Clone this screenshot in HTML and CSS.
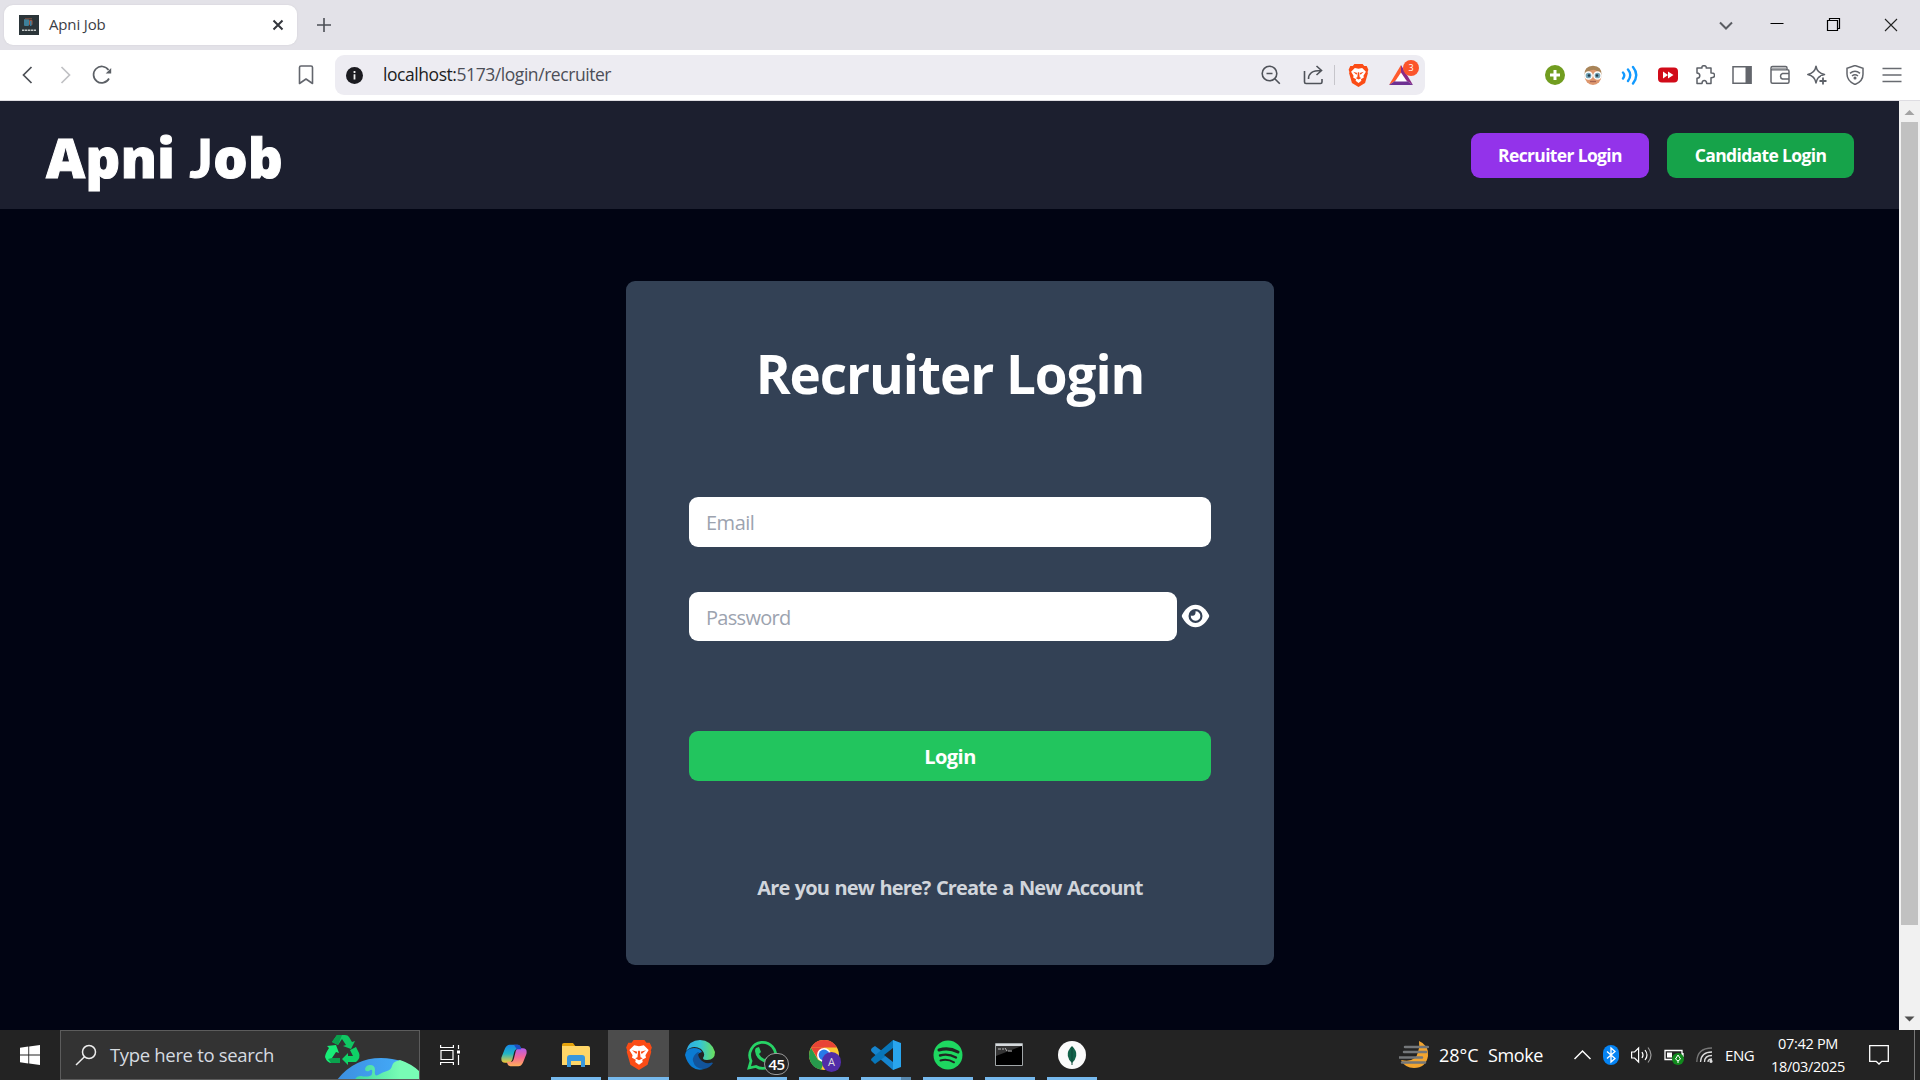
FILE: index.html
```html
<!DOCTYPE html>
<html lang="en">
<head>
<meta charset="utf-8">
<title>Apni Job</title>
<link rel="stylesheet" href="styles.css">
</head>
<body>
<div class="screen">
  <div class="tabbar">
    <div class="tab">
      <svg class="favicon" width="20" height="20" viewBox="0 0 20 20"><rect width="20" height="20" fill="#2b3539"/><rect x="5" y="4" width="5" height="7" rx="1" fill="#3d7f99"/><path d="M6 3h7v1.500H6z" fill="#6b4b40"/><rect x="10" y="5" width="3.500" height="5" rx="1" fill="#9d5a45"/><path d="M11 6h1.500v5H11z" fill="#397c9e"/><path d="M3 15.300h14" stroke="#c4c9c9" stroke-width="1.600" stroke-dasharray="2.400 .6"/></svg>
      <span class="tab-title">Apni Job</span>
      <svg class="tab-close" width="12" height="12" viewBox="0 0 12 12"><path d="M1.500 1.500l9 9M10.500 1.500l-9 9" stroke="#33363c" stroke-width="2"/></svg>
    </div>
    <svg class="newtab" width="14" height="14" viewBox="0 0 14 14"><path d="M7 0v14M0 7h14" stroke="#4c4f55" stroke-width="1.600"/></svg>
    <div class="window-controls">
      <svg width="20" height="20" viewBox="0 0 20 20" fill="none"><path d="M4 7.500l6 6 6-6" stroke="#5a5c62" stroke-width="2"/></svg>
      <svg class="minimise" width="20" height="20" viewBox="0 0 20 20"><path d="M3.500 8.500h13" stroke="#000"/></svg>
      <svg class="restore" width="20" height="20" viewBox="0 0 20 20" fill="none" stroke="#000" stroke-width="1.200"><path d="M4.500 5.500h10v10h-10zM6.500 5v-1.500h10v10h-2"/></svg>
      <svg class="close" width="20" height="20" viewBox="0 0 20 20"><path d="M4 4l12 12M16 4L4 16" stroke="#222" stroke-width="1.100"/></svg>
    </div>
  </div>

  <div class="toolbar">
    <div class="nav">
      <svg width="20" height="20" viewBox="0 0 20 20" fill="none"><path d="M13.500 2L5.500 10l8 8" stroke="#4c4f55" stroke-width="1.700"/></svg>
      <svg width="20" height="20" viewBox="0 0 20 20" fill="none"><path d="M6.500 2l8 8-8 8" stroke="#c0c1c4" stroke-width="1.700"/></svg>
      <svg width="20" height="20" viewBox="0 0 20 20" fill="none"><path d="M17 13.500A8.200 8.200 0 1 1 16.500 5" stroke="#5c6066" stroke-width="1.700"/><path d="M19.200 3v5.500h-5.500z" fill="#5c6066"/></svg>
    </div>
    <svg class="bookmark" width="16" height="20" viewBox="0 0 16 20" fill="none"><path d="M1.500 2.500q0-1.500 1.500-1.500h10q1.500 0 1.500 1.500V18.500L8 14l-6.500 4.500z" stroke="#63666d" stroke-width="1.600" stroke-linejoin="round"/></svg>
    <div class="address">
      <svg width="17" height="17" viewBox="0 0 17 17"><circle cx="8.500" cy="8.500" r="8.500" fill="#1b1b20"/><path d="M8.500 7.200v5.300M8.500 4v2" stroke="#eee" stroke-width="1.800"/></svg>
      <span class="url"><span class="host">localhost:</span>5173/login/recruiter</span>
      <div class="address-icons">
        <svg width="20" height="20" viewBox="0 0 20 20" fill="none" stroke="#4f5259" stroke-width="1.600"><circle cx="8.500" cy="8.500" r="7.300"/><path d="M13.800 13.800l5 5M5.500 8.500h6"/></svg>
        <svg width="20" height="20" viewBox="0 0 20 20" fill="none" stroke="#4f5259" stroke-width="1.600"><path d="M1.500 6v11q0 1.500 1.500 1.500h14.500q1.500 0 1.500-1.500v-3M5.500 14C5.500 8 9 5.500 18 5.500M13.500 1l5 4.500-5 4.500"/></svg>
        <i class="divider"></i>
        <svg class="brave" width="21" height="23" viewBox="0 0 24 28"><use href="#lion"/></svg>
        <div class="rewards">
          <svg width="24" height="20" viewBox="0 0 24 20"><path d="M12 0L0 20l12-8z" fill="#ff5b2e"/><path d="M12 0l12 20-12-8z" fill="#8b2a86"/><path d="M0 20h24L12 12z" fill="#6d3092"/><path d="M12 7.500L6 16.500h12z" fill="#fff"/></svg>
          <span class="badge">3</span>
        </div>
      </div>
    </div>
    <div class="extensions">
      <svg width="20" height="20" viewBox="0 0 20 20"><circle cx="10" cy="10" r="10" fill="#719d20"/><path d="M10 5v10M5 10h10" stroke="#fff" stroke-width="3"/></svg>
      <svg width="20" height="20" viewBox="0 0 20 20"><ellipse cx="10" cy="11" rx="8.500" ry="9" fill="#dd976e"/><path d="M1.500 10Q1 1 10 .8 19 1 18.500 10L15 7Q12 4 9 5 4 6 1.500 10z" fill="#a88458"/><circle cx="5.500" cy="10.500" r="3.600" fill="#74a5b7" stroke="#fff" stroke-width="1.500"/><circle cx="14.500" cy="10.500" r="3.600" fill="#74a5b7" stroke="#fff" stroke-width="1.500"/><circle cx="6" cy="10.500" r="1.300" fill="#253b49"/><circle cx="14" cy="10.500" r="1.300" fill="#253b49"/><path d="M7 16.500h6" stroke="#a86451" stroke-width="1.300"/></svg>
      <svg width="20" height="20" viewBox="0 0 20 20" fill="none" stroke="#129aff" stroke-width="2.400" stroke-linecap="round"><path d="M3 7.500Q5.500 10 3 13.500M8 4.500Q12.500 10 8 16M13 2q6.500 8 0 16.500"/></svg>
      <svg width="20" height="20" viewBox="0 0 20 20"><rect y="2.500" width="20" height="15" rx="4" fill="#d10b19"/><path d="M5 6.500l5 3.500-5 3.500zM10 6.500l5.500 3.500-5.500 3.500z" fill="#fff"/></svg>
      <svg width="20" height="20" viewBox="0 0 20 20" fill="none" stroke="#5d6168" stroke-width="1.500" stroke-linejoin="round"><path d="M2 3h5q-.5-2.300 2-2.300T11.200 3H16v5q3.500-.3 3.500 2.300T16 12.800V18.500h-4.300q-.2-3-2.400-3t-2.300 3H2v-5.200q2.800-.2 2.800-2.600T2 8z"/></svg>
      <svg width="20" height="20" viewBox="0 0 20 20"><path d="M1 1.700h18v16.600H1z" fill="none" stroke="#63666c" stroke-width="1.500"/><path d="M13.500 1h6v18h-6z" fill="#63666c"/></svg>
      <svg width="20" height="20" viewBox="0 0 20 20" fill="none" stroke="#63666c" stroke-width="1.500"><path d="M1 5V3q0-1.500 1.500-1.500h13Q17 1.500 17 3v2M1 4.800h16.500q1.500 0 1.500 1.500v10.500q0 1.500-1.500 1.500h-15q-1.500 0-1.500-1.500zM19 8.500h-6.500q-2 .5-2 2.700t2 2.800H19"/><path d="M2 3.500h14" stroke="#a5a7aa" stroke-width="2"/></svg>
      <svg width="20" height="20" viewBox="0 0 20 20"><path d="M9 1.200Q10 8 17.500 9.500 10 11 9 18 8 11 .8 9.500 8 8 9 1.200z" fill="none" stroke="#5d6168" stroke-width="1.500" stroke-linejoin="round"/><path d="M16 11v9M11.500 15.500h9" stroke="#fff" stroke-width="4"/><path d="M16 12.500v7M12.500 16h7" stroke="#5d6168" stroke-width="1.800"/></svg>
      <svg width="20" height="20" viewBox="0 0 20 20" fill="none" stroke="#63666c" stroke-width="1.500"><path d="M10 .5l8 2.700v6q0 7-8 10.300Q2 16 2 9V3.200z"/><path d="M5 8.300q5-4 10 0M7 11q3-2.500 6 0"/><circle cx="10" cy="13" r=".8"/></svg>
      <svg width="20" height="20" viewBox="0 0 20 20"><path d="M.5 3.500h19M.5 10h19M.5 16.500h19" stroke="#686b71" stroke-width="1.500"/></svg>
    </div>
  </div>

  <div class="viewport">
    <div class="page">
      <header class="site-header">
        <h1 class="brand">Apni <span class="cap-j">J</span>ob</h1>
        <nav class="logins">
          <a class="pill purple">Recruiter Login</a>
          <a class="pill green">Candidate Login</a>
        </nav>
      </header>
      <main class="content">
        <section class="card">
          <h2 class="card-title">Recruiter Login</h2>
          <div class="field email">Email</div>
          <div class="password-row">
            <div class="field password">Password</div>
            <svg class="eye" width="29" height="24" viewBox="0 0 28 24"><path d="M14 .8c-6 0-10.500 4.600-13.500 10.200q-.4 1 0 2C3.500 18.600 8 23.200 14 23.200S24.500 18.600 27.500 13q.4-1 0-2C24.500 5.400 20 .8 14 .8z" fill="#fff"/><circle cx="14" cy="12" r="7" fill="#334155"/><path d="M14 7.200a4.800 4.800 0 1 1-4.700 4.200c3.500 1.200 5.200-1 4.700-4.200z" fill="#fff"/></svg>
          </div>
          <div class="submit">Login</div>
          <p class="signup">Are you new here? Create a New Account</p>
        </section>
      </main>
    </div>
    <div class="scrollbar">
      <svg width="21" height="21" viewBox="0 0 21 21"><path d="M5.500 14l5-5 5 5z" fill="#a3a3a3"/></svg>
      <div class="thumb"></div>
      <svg width="21" height="21" viewBox="0 0 21 21"><path d="M5.500 7.500l5 5 5-5z" fill="#505050"/></svg>
    </div>
  </div>

  <div class="taskbar">
    <div class="start"><svg width="20" height="20" viewBox="0 0 20 20" fill="#fff"><path d="M0 2.800l8.300-1.200v7.900H0zM9.200 1.500L20 0v9.500H9.200zM0 10.400h8.300v8L0 17.300zM9.200 10.400H20V20L9.200 18.500z"/></svg></div>
    <div class="search">
      <svg width="22" height="22" viewBox="0 0 22 22" fill="none" stroke="#eee" stroke-width="1.500"><circle cx="14" cy="8" r="6.500"/><path d="M9.500 12.800L1 21"/></svg>
      <span class="search-text">Type here to search</span>
      <svg class="earth" width="96" height="48" viewBox="0 0 96 48"><defs><linearGradient id="sea"><stop stop-color="#3c8fe0"/><stop offset="1" stop-color="#46b2ff"/></linearGradient><linearGradient id="land"><stop stop-color="#3fd9a0"/><stop offset=".7" stop-color="#78fcb5"/></linearGradient></defs><path d="M14 4h8q3 0 4 2l3 5 3-1-4 8-8-3 3-1-4-6-4 6-6-3z" fill="#10c763"/><path d="M14 4h5l-4 10-6-3z" fill="#0a9f4c"/><path d="M27 19l6-3 3 6q2 5-3 9h-8v3l-6-6 6-6v3h5z" fill="#0fd367"/><path d="M4 15l9-1 3 8-3-1-4 6h8v5H9q-5 0-7-6 0-3 4-9z" fill="#18ec77"/><path d="M9 27h8v5H8l-3-4z" fill="#0aa14d"/><path d="M14 49Q31 27 58 27q24 0 39 15v7z" fill="url(#sea)"/><path d="M32 49q1-4 6-4 5 1 9 0 3-1 2-6-1-1-3 1-4 1-4-2 1-4 5-4 5 0 5 5-1 7 3 5 5-3 9-4 4-1 5-5 1-4 5-5l3-1q12 4 20 12v9z" fill="url(#land)"/></svg>
    </div>
    <div class="taskview"><svg width="20" height="20" viewBox="0 0 20 20" fill="none" stroke="#fff" stroke-width="1.200"><path d="M1 5.500h12v9H1zM.6 0v2.500h12.800V0M.6 20v-2.500h12.800V20M18.500 0v4M18.500 10v10"/><path d="M17 7h3" stroke-width="3"/></svg></div>
    <div class="apps">
      <div class="app"><svg width="28" height="25" viewBox="0 0 30 28"><defs><linearGradient id="cpa" x2="0" y2="1"><stop stop-color="#1787e8"/><stop offset=".5" stop-color="#20b6c5"/><stop offset="1" stop-color="#f5c933"/></linearGradient><linearGradient id="cpb" x2="0" y2="1"><stop stop-color="#b45dea"/><stop offset=".5" stop-color="#f56796"/><stop offset="1" stop-color="#ffb05a"/></linearGradient></defs><path d="M10 2h9q3 0 4 5h-5q-2 0-3 4l-2 8q-1 3-5 3H5Q0 22 1 16L5 6q2-4 5-4z" fill="url(#cpa)"/><path d="M20 26h-9q-3 0-4-5h5q2 0 3-4l2-8q1-3 5-3h3q5 0 4 6l-4 10q-2 4-5 4z" fill="url(#cpb)"/><path d="M15 2h4q3 0 4 5h-5z" fill="#1d4dc3"/></svg></div>
      <div class="app open"><svg width="28" height="24" viewBox="0 0 28 24"><path d="M0 2q0-2 2-2h9l3 4H0z" fill="#e5a30b"/><path d="M0 3h26q2 0 2 2v17H0z" fill="#ffd667"/><path d="M5 24V15q0-3 3-3h12q3 0 3 3v9h-4v-6H9v6z" fill="#3997dc"/></svg></div>
      <div class="app open active"><svg width="26" height="30" viewBox="0 0 24 28"><g id="lion"><path d="M7 0h10l2 2.500h3L24 7l-1 3 .5 1-3.500 12-8 5-8-5L.5 11 1 10 0 7l2-4.500h3z" fill="#fb4c16"/><path d="M7.500 4.800l4.500 1 4.500-1 4.500 4.500-3 5 .5 2.200-3.500 2 .5 2-3.500 2.700-3.500-2.700.5-2-3.500-2 .5-2.200-3-5z" fill="#fff"/><path d="M5.500 9.500l5 1.500-1 2zM18.500 9.500l-5 1.500 1 2zM11.200 10h1.600l.6 6 2.100 1-3.500 2-3.500-2 2.100-1z" fill="#fb4c16"/></g></svg></div>
      <div class="app"><svg width="30" height="30" viewBox="0 0 30 30"><defs><linearGradient id="ea"><stop stop-color="#2ba9e8"/><stop offset=".5" stop-color="#37c6d0"/><stop offset="1" stop-color="#6be05b"/></linearGradient></defs><path d="M1 11Q4 0 15 0t15 12q0 8-8 8-6 0-3-4 1-3-3-7-8-5-15 2z" fill="url(#ea)"/><path d="M0 15q1-7 9-7 6 0 8 4-7 2-6 8 2 7 8 9-7 2-12-2T0 15z" fill="#0b7cd3"/><path d="M13 12q-6 4-5 9 2 8 11 8 6-1 9-6-1-1-3 0-6 1-10-4-3-4-1-7z" fill="#12549c"/></svg></div>
      <div class="app open">
        <svg width="30" height="30" viewBox="0 0 30 30"><path d="M2 28l2-7A13 13 0 1 1 9 26.500z" fill="#242424" stroke="#27d366" stroke-width="2.800"/><path d="M9 8l3-1 2 5-2 2q2 4 6 5l2-2 4 2q-1 5-5 4Q9 20 8 11q0-2 1-3z" fill="#27d366"/></svg>
        <span class="count">45</span>
      </div>
      <div class="app open">
        <svg width="30" height="30" viewBox="0 0 30 30"><circle cx="15" cy="15" r="15" fill="#fbc934"/><path d="M2 7.500A15 15 0 0 1 28 7.500H15z" fill="#e84436"/><path d="M2 7.500L9 20l6 2-3 7.700Q2 28 0 17 0 11 2 7.500z" fill="#279a4c"/><path d="M2 7.500L9 19 15 7.500z" fill="#e84436"/><circle cx="15" cy="15" r="7" fill="#fff"/><circle cx="15" cy="15" r="5.400" fill="#287ae8"/></svg>
        <span class="profile">A</span>
      </div>
      <div class="app open stacked"><svg width="30" height="30" viewBox="0 0 30 30"><path d="M1 8l3-2 26 19-8 5L1 12Q-1 10 1 8z" fill="#1685cf"/><path d="M1 21l3 3L30 5 22 0 1 18Q-1 20 1 21z" fill="#0876b9"/><path d="M22 0l8 3v24l-8 3z" fill="#29a5ee"/><path d="M22 8v14l-9-7z" fill="#242424"/></svg></div>
      <div class="app open"><svg width="30" height="30" viewBox="0 0 30 30" fill="none" stroke="#202522" stroke-linecap="round"><circle cx="15" cy="15" r="14.500" fill="#1ed760" stroke="none"/><path d="M6 10q10-3 19 2" stroke-width="3"/><path d="M7 15.500q8-2.500 16 2" stroke-width="2.400"/><path d="M7.500 20.500q7-2 13.500 1.800" stroke-width="2"/></svg></div>
      <div class="app open"><svg class="terminal" width="28" height="23" viewBox="0 0 28 23"><path d="M.5.5h27v22H.5z" fill="#000" stroke="#a1a6a8"/><path d="M1 3h26L1 13z" fill="#343434"/><path d="M1 1h26v2H1z" fill="#d6dadd"/><path d="M3 6h3M8 5v2M10 5l2 3M13 8h4" stroke="#bbb"/></svg></div>
      <div class="app open"><svg width="28" height="28" viewBox="0 0 28 28"><circle cx="14" cy="14" r="14" fill="#fafafa"/><path d="M14 5q5 4.500 4.200 10-.7 4-4.200 7-3.500-3-4.200-7Q9 9.500 14 5z" fill="#126149"/><path d="M14 6v18" stroke="#0d4938"/></svg></div>
    </div>
    <div class="weather">
      <svg width="30" height="30" viewBox="0 0 30 30"><path d="M20 1q10 4 9 15-2 12-14 12Q6 28 2 20q15 3 17-8 2-5 1-11z" fill="#f3a52f"/><path d="M6 7h23M5 12h22M0 17.500h23M3 22.500h23" stroke="#74777a" stroke-width="2.500" stroke-linecap="round"/></svg>
      <span class="temp">28°C</span><span class="smoke">Smoke</span>
    </div>
    <div class="tray">
      <svg width="17" height="20" viewBox="0 0 17 20" fill="none"><path d="M.5 14l8-8 8 8" stroke="#fff" stroke-width="1.500"/></svg>
      <svg width="16" height="20" viewBox="0 0 16 20"><rect width="16" height="20" rx="8" fill="#0584f4"/><path d="M4 6.500l8 7L8 17V3l4 3.500-8 7" fill="none" stroke="#fff" stroke-width="1.300"/></svg>
      <svg width="21" height="20" viewBox="0 0 21 20" fill="none" stroke="#fff" stroke-width="1.200"><path d="M.6 7h3l4-4v14l-4-4h-3zM11 7q2 3 0 6M14 5q4 5 0 10"/><path d="M17 2.500q6 7.500 0 15" stroke="#999"/></svg>
      <svg width="20" height="20" viewBox="0 0 20 20"><path d="M1 5.500h17v9H1zM19 8v4" fill="none" stroke="#fff" stroke-width="1.300"/><path d="M3 7.500h5v5H3z" fill="#fff"/><circle cx="14" cy="14" r="6" fill="#118a1d"/><path d="M14 10l2.500 4-2.500 2-2.500-2zM14 15v3" fill="none" stroke="#fff"/></svg>
      <svg width="18" height="20" viewBox="0 0 18 20" fill="none" stroke="#ddd" stroke-width="1.300"><path d="M.8 17Q1 3 16 3" stroke="#777"/><path d="M4.500 17Q5 7 16 7M8.500 17q0-6.500 7.500-6.500M12 17q0-3 4-3"/><circle cx="15" cy="16.300" r="1" fill="#fff"/></svg>
    </div>
    <span class="lang">ENG</span>
    <div class="clock"><span class="time">07:42 PM</span><span class="date">18/03/2025</span></div>
    <svg class="notice" width="20" height="20" viewBox="0 0 20 20" fill="none"><path d="M.7.7h18.600v15.600h-6.500L10 19l-2.800-2.700H.7z" stroke="#fff" stroke-width="1.300"/></svg>
    <i class="peek"></i>
  </div>
</div>
</body>
</html>
```
FILE: styles.css
```css
* { box-sizing: border-box; margin: 0; padding: 0; }
body { overflow: hidden; font-family: "Open Sans", "Noto Sans", sans-serif; }
svg { display: block; flex: none; }
.screen { width: 1920px; height: 1080px; display: flex; flex-direction: column; }

.tabbar { height: 50px; background: #e3e2e8; display: flex; align-items: center; padding: 0 19px 0 4px; }
.tab { width: 293px; height: 40px; border-radius: 9px; background: #fff; display: flex; align-items: center; padding: 0 13px 0 15px; box-shadow: 0 0 2px #d0cfd5; }
.tab-title { margin-left: 10px; padding-bottom: 2px; font-size: 15px; letter-spacing: -0.15px; color: #3c3e45; }
.tab-close { margin-left: auto; }
.newtab { margin-left: 20px; }
.window-controls { margin-left: auto; display: flex; }
.minimise { margin-left: 31px; }
.restore { margin-left: 36px; }
.close { margin-left: 38px; }

.toolbar { height: 51px; background: #fff; border-bottom: 1px solid #dedde2; display: flex; align-items: center; padding-left: 18px; padding-right: 18px; }
.nav { display: flex; gap: 17px; }
.bookmark { margin-left: 186px; }
.address { margin-left: 21px; width: 1090px; height: 40px; border-radius: 9px; background: #edecf2; display: flex; align-items: center; padding: 0 12px 0 11px; }
.url { margin-left: 20px; padding-bottom: 2px; font-size: 17.500px; letter-spacing: -0.44px; color: #4c4e57; white-space: nowrap; }
.host { color: #1c1d22; }
.address-icons { margin-left: auto; display: flex; align-items: center; }
.address-icons svg + svg { margin-left: 22px; }
.divider { width: 1px; height: 20px; margin: 0 13px 0 11px; background: #c6c5cb; }
.rewards { position: relative; margin-left: 20px; }
.badge { position: absolute; left: 14px; top: -5px; width: 16px; height: 16px; border-radius: 8px; background: #fb542b; color: #fff; font-size: 9px; line-height: 16px; text-align: center; }
.extensions { margin-left: auto; display: flex; gap: 17.4px; }

.viewport { flex: 1; display: flex; min-height: 0; }
.page { width: 1899px; background: #010413; display: flex; flex-direction: column; }
.site-header { height: 108px; background: #1c1f2f; display: flex; align-items: flex-start; justify-content: space-between; padding: 0 45px 0 46px; }
.brand { margin-top: 19px; font-size: 54px; letter-spacing: 0.35px; line-height: 74px; font-weight: 800; color: #fff; -webkit-text-stroke: 1px #fff; white-space: nowrap; }
.cap-j { font-family: Lato, sans-serif; font-weight: 900; }
.logins { display: flex; gap: 18px; margin-top: 32px; }
.pill { height: 45px; border-radius: 9px; color: #fff; font-size: 17.500px; letter-spacing: -0.65px; line-height: 45px; font-weight: 700; text-align: center; }
.purple { width: 178px; background: #9333ea; }
.green { width: 187px; background: #16a34a; }
.content { flex: 1; display: flex; justify-content: center; align-items: flex-start; padding-top: 72px; }
.card { width: 648px; height: 684px; margin-left: 1px; border-radius: 9px; background: #334155; padding: 63px; display: flex; flex-direction: column; }
.card-title { margin-top: -7px; font-size: 53px; letter-spacing: -1.050px; line-height: 74px; font-weight: 700; color: #fff; text-align: center; white-space: nowrap; }
.field { height: 50px; border-radius: 9px; background: #fff; padding-left: 17px; font-size: 20px; letter-spacing: -0.5px; line-height: 52px; color: #9ca3af; }
.email { margin-top: 86px; }
.password-row { display: flex; align-items: center; gap: 5px; margin-top: 45px; }
.password-row .field { width: 488px; height: 49px; letter-spacing: -0.7px; }
.eye { margin: 0 0 1px -1px; }
.submit { height: 50px; margin-top: 90px; border-radius: 9px; background: #22c55e; color: #fff; font-size: 20px; letter-spacing: -0.5px; font-weight: 700; line-height: 52px; text-align: center; }
.signup { margin-top: 93px; font-size: 20px; letter-spacing: -0.850px; word-spacing: 1px; line-height: 28px; font-weight: 700; color: #d1d5db; text-align: center; white-space: nowrap; }
.scrollbar { width: 21px; background: #f1f1f1; display: flex; flex-direction: column; align-items: center; justify-content: space-between; }
.thumb { width: 17px; height: 803px; margin-bottom: auto; background: #c1c1c1; }

.taskbar { height: 50px; background: #232323; color: #fff; display: flex; align-items: center; }
.start { width: 60px; display: flex; justify-content: center; }
.search { width: 360px; height: 50px; border: 1px solid #5c5c5c; background: #333; display: flex; align-items: center; padding-left: 14px; overflow: hidden; }
.search-text { margin-left: 13px; padding-bottom: 1px; font-size: 18.500px; letter-spacing: -0.330px; color: #d6dbe0; white-space: nowrap; }
.earth { margin-left: auto; }
.taskview { width: 60px; display: flex; justify-content: center; }
.apps { display: flex; gap: 12px; margin-left: 9px; }
.app { position: relative; width: 50px; height: 50px; display: flex; align-items: center; justify-content: center; }
.open::after { content: ""; position: absolute; left: 0; bottom: 0; width: 50px; height: 3px; background: #76b9ed; }
.active { width: 61px; margin: 0 -6px 0 -5px; background: #4c4c4c; }
.active::after { width: 61px; }
.stacked::after { background: linear-gradient(90deg, #76b9ed 40px, #5787ad 40px); }
.terminal { margin: 0 2px 2px 0; }
.count { position: absolute; left: 27px; top: 23px; width: 25px; height: 22px; border: 1px solid #999; border-radius: 12px; background: #222; font-size: 15px; letter-spacing: -0.5px; font-weight: 600; line-height: 20px; text-align: center; }
.profile { position: absolute; left: 23px; top: 22px; width: 19px; height: 20px; border-radius: 10px; background: #512da8; font-size: 11px; line-height: 20px; text-align: center; color: #ddd; }
.weather { margin-left: auto; display: flex; align-items: center; font-size: 18px; white-space: nowrap; }
.temp { margin-left: 10px; width: 49px; }
.smoke { width: 54px; letter-spacing: -0.4px; }
.tray { display: flex; align-items: center; gap: 12px; margin-left: 32px; }
.lang { width: 30px; margin-left: 11px; font-size: 15px; letter-spacing: -0.4px; white-space: nowrap; }
.clock { width: 76px; margin-left: 15px; display: flex; flex-direction: column; align-items: center; font-size: 14.500px; letter-spacing: -0.3px; line-height: 23px; white-space: nowrap; }
.notice { margin-left: 23px; }
.peek { width: 1px; height: 50px; margin: 0 5px 0 25px; background: #777; }
```
